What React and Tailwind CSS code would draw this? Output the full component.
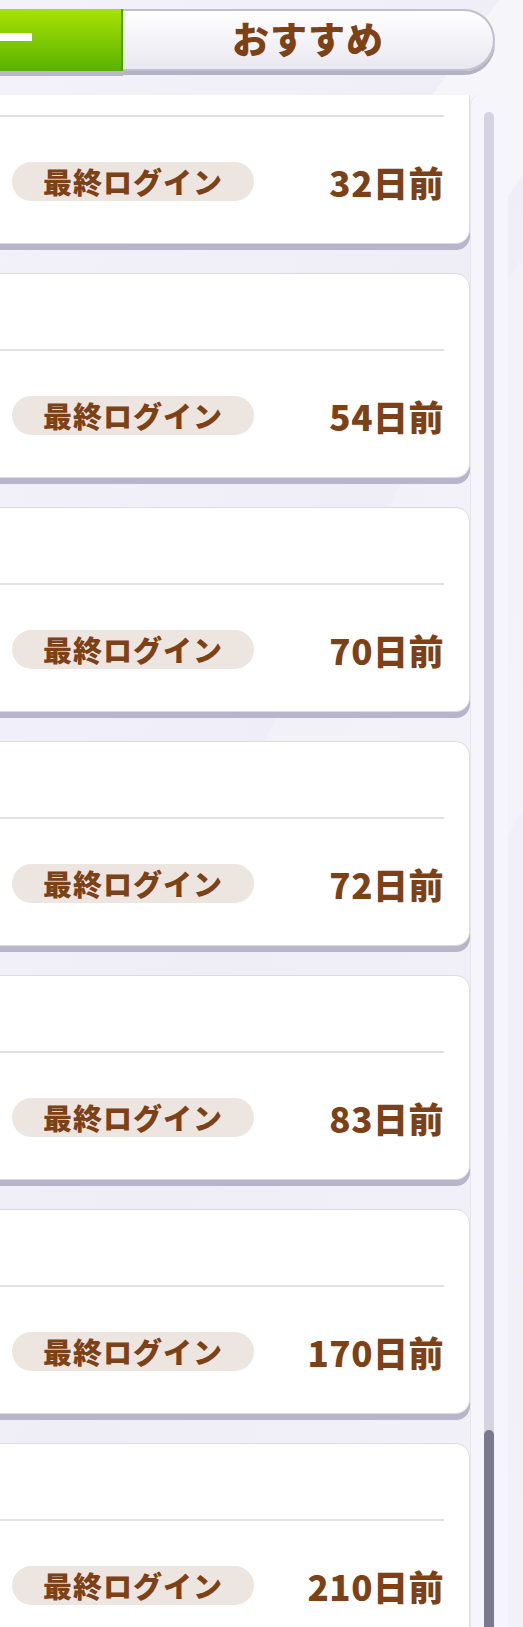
import React from 'react'

const brown = 'text-[#7c4117]'
const font = { fontFamily: '"Noto Sans CJK JP", "Noto Sans", sans-serif' }

// days since last login, top to bottom
const rows = [32, 54, 70, 72, 83, 170, 210]

function FriendCard({ days }) {
  return (
    <div className="relative -ml-[30px] w-[500px] h-[205px] shrink-0 bg-white border border-[#dcdbe4] rounded-r-[14px] shadow-[0_6px_0_#b7b4cb]">
      {/* name area (clipped on the left) */}
      <div className="h-[77px] mr-[25px] border-b-2 border-[#e2e1e6]" />
      <div className="flex items-center justify-between mt-[45px] pl-[41px] pr-[25px]">
        <div className="w-[242px] h-[39px] rounded-full bg-[#ede5e0] flex items-center justify-center">
          <span className={`${brown} font-black text-[29px] leading-none tracking-[1px]`}>最終ログイン</span>
        </div>
        <span className={`${brown} font-black text-[35px] leading-none tracking-[0.5px]`}>{days}日前</span>
      </div>
    </div>
  )
}

export default function App() {
  return (
    <div
      className="relative w-[523px] h-[1627px] overflow-hidden bg-gradient-to-br from-[#f3f2f9] via-[#efeef7] to-[#f2f1f8]"
      style={font}
    >
      {/* faint diagonal sheen in the backdrop */}
      <div className="absolute -right-[120px] top-[200px] w-[260px] h-[700px] bg-white/20 rotate-[28deg]" />
      <div className="absolute -right-[60px] top-[-80px] w-[120px] h-[300px] bg-white/40 rotate-[35deg]" />

      {/* tab bar */}
      <div className="relative flex pt-[9px] h-[95px]">
        <div className="w-[123px] h-[62px] bg-gradient-to-b from-[#a8e203] to-[#58b301] border-r-2 border-[#4c9a06] shadow-[0_5px_0_#b9b7c9] flex items-start">
          <div className="mt-[24px] w-[32px] h-[8px] bg-white" />
        </div>
        <div className="w-[372px] h-[62px] rounded-r-full bg-gradient-to-b from-white to-[#e9e8f0] border-2 border-l-0 border-[#c1bfcd] shadow-[0_4px_0_#b3b1c4] flex items-center justify-center">
          <span className={`${brown} font-black text-[37px] leading-none tracking-[1px] pb-[3px]`}>おすすめ</span>
        </div>
      </div>

      {/* list + scrollbar */}
      <div className="relative flex h-[1532px]">
        <div className="w-[470px] h-full overflow-hidden">
          <div className="flex flex-col gap-[29px] -mt-[56px]">
            {rows.map(d => <FriendCard key={d} days={d} />)}
          </div>
        </div>
        <div className="w-[38px] h-full rounded-t-[10px] bg-[#f6f5fb] border-l border-[#e6e5ec] pt-[17px] pl-[13px]">
          <div className="relative w-[10px] h-full rounded-t-full bg-[#d4d3df]">
            <div className="absolute left-0 top-[1318px] w-[10px] h-[300px] rounded-t-full bg-[#7b798f]" />
          </div>
        </div>
      </div>
    </div>
  )
}
